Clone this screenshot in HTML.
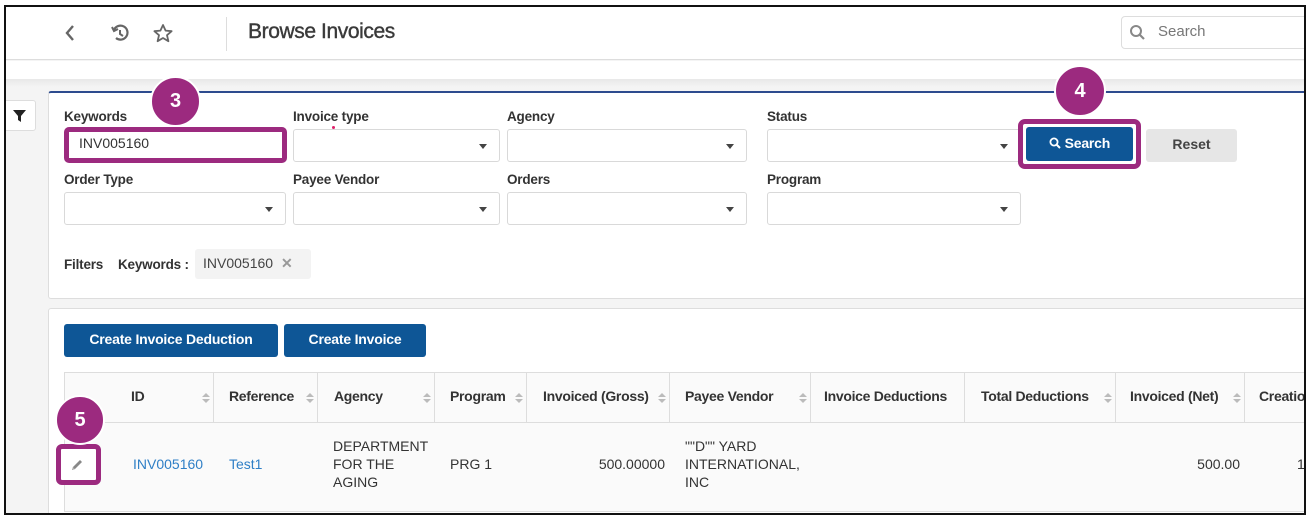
<!DOCTYPE html>
<html><head><meta charset="utf-8"><style>
*{box-sizing:border-box;margin:0;padding:0}
body{width:1311px;height:522px;background:#fff;position:relative;overflow:hidden;font-family:"Liberation Sans",sans-serif;color:#333}
.a{position:absolute}
.frame{left:4px;top:5px;width:1302px;height:510px;border:2px solid #111;overflow:hidden;background:#f4f4f4}
.in{position:absolute}
.lbl{font-size:13.5px;font-weight:bold;color:#333;letter-spacing:-.2px}
.sel{background:#fff;border:1px solid #d9d9d9;border-radius:3px;height:33px}
.sel:after{content:"";position:absolute;right:12px;top:14px;border-left:4px solid transparent;border-right:4px solid transparent;border-top:5px solid #444}
.badge{background:#9c2a7f;border:2px solid #fff;border-radius:50%;color:#fff;font-weight:bold;font-size:20px;text-align:center}
.btn{background:#0e5696;color:#fff;font-weight:bold;font-size:14px;border-radius:3px;text-align:center;letter-spacing:-.2px}
.th{position:absolute;top:0;height:50px;line-height:46px;font-size:14px;font-weight:bold;color:#333;border-right:1px solid #ddd;padding-left:16px;letter-spacing:-.3px;white-space:nowrap}
.th i{position:absolute;right:7px;top:20px;width:0;height:0}
.th i:before{content:"";position:absolute;left:-4px;top:0;border-left:4px solid transparent;border-right:4px solid transparent;border-bottom:4px solid #bbb}
.th i:after{content:"";position:absolute;left:-4px;top:6px;border-left:4px solid transparent;border-right:4px solid transparent;border-top:4px solid #bbb}
.td{position:absolute;font-size:14px;line-height:18px;color:#333}
</style></head><body>
<div class="a frame">
 <div class="in" style="left:0;top:0;width:1300px;height:53px;background:#fff;border-bottom:1px solid #ddd"></div>
 <svg class="in" style="left:52px;top:14px" width="130" height="26" viewBox="0 0 130 26">
  <path d="M15 5 L9 12 L15 19" fill="none" stroke="#666" stroke-width="2.4"/>
  <path d="M56 9 A7 7 0 1 1 58 17" fill="none" stroke="#666" stroke-width="2.2"/>
  <path d="M54 6 L56 10 L60 8" fill="none" stroke="#666" stroke-width="2"/>
  <path d="M62 9 L62 13 L65 15" fill="none" stroke="#666" stroke-width="2"/>
  <path d="M105 4 L107.6 9.6 L113.6 10.2 L109 14.2 L110.4 20.2 L105 17 L99.6 20.2 L101 14.2 L96.4 10.2 L102.4 9.6 Z" fill="none" stroke="#666" stroke-width="1.8" stroke-linejoin="round"/>
 </svg>
 <div class="in" style="left:220px;top:10px;width:1px;height:34px;background:#ddd"></div>
 <div class="in" style="left:242px;top:13px;font-size:21px;color:#3a3a3a;letter-spacing:-.4px;-webkit-text-stroke:.4px #3a3a3a">Browse Invoices</div>
 <div class="in" style="left:1115px;top:9px;width:200px;height:33px;border:1px solid #ddd;border-radius:4px;background:#fff"></div>
 <svg class="in" style="left:1123px;top:17px" width="18" height="18"><circle cx="7" cy="7" r="5" fill="none" stroke="#888" stroke-width="2"/><path d="M11 11 L15 15" stroke="#888" stroke-width="2.2"/></svg>
 <div class="in" style="left:1152px;top:16px;font-size:15px;color:#777">Search</div>
 <div class="in" style="left:0;top:54px;width:1300px;height:18px;background:#fff"></div>
 <div class="in" style="left:0;top:72px;width:1300px;height:8px;background:linear-gradient(#e8e8e8,#f4f4f4)"></div>
 <div class="in" style="left:-4px;top:93px;width:34px;height:31px;background:#fff;border:1px solid #ddd;border-radius:3px"></div>
 <svg class="in" style="left:7px;top:102px" width="14" height="14"><path d="M0 1 H13 L8 7 V13 L5 11 V7 Z" fill="#222"/></svg>
 <div class="in" style="left:42px;top:84px;width:1260px;height:208px;background:#fff;border:1px solid #ddd;border-top:2px solid #2d4b8e;border-radius:3px"></div>
 <div class="in lbl" style="left:58px;top:102px">Keywords</div>
 <div class="in lbl" style="left:287px;top:102px">Invoice type</div>
 <div class="in lbl" style="left:501px;top:102px">Agency</div>
 <div class="in lbl" style="left:761px;top:102px">Status</div>
 <div class="in" style="left:326px;top:119px;width:3px;height:3px;border-radius:50%;background:#e0206a"></div>
 <div class="in" style="left:58px;top:120px;width:223px;height:36px;border:5px solid #9c2a7f;border-radius:5px;background:#fff;font-size:14px;padding:3px 0 0 10px;color:#333">INV005160</div>
 <div class="in sel" style="left:287px;top:122px;width:207px"></div>
 <div class="in sel" style="left:501px;top:122px;width:240px"></div>
 <div class="in sel" style="left:761px;top:122px;width:254px"></div>
 <div class="in lbl" style="left:58px;top:165px">Order Type</div>
 <div class="in lbl" style="left:287px;top:165px">Payee Vendor</div>
 <div class="in lbl" style="left:501px;top:165px">Orders</div>
 <div class="in lbl" style="left:761px;top:165px">Program</div>
 <div class="in sel" style="left:58px;top:185px;width:222px"></div>
 <div class="in sel" style="left:287px;top:185px;width:207px"></div>
 <div class="in sel" style="left:501px;top:185px;width:240px"></div>
 <div class="in sel" style="left:761px;top:185px;width:254px"></div>
 <div class="in" style="left:1012px;top:112px;width:123px;height:50px;border:5px solid #9c2a7f;border-radius:7px;background:#fff"></div>
 <div class="in btn" style="left:1020px;top:120px;width:107px;height:34px;line-height:32px">
  <svg width="12" height="12" style="vertical-align:-1px"><circle cx="5" cy="5" r="3.6" fill="none" stroke="#fff" stroke-width="1.8"/><path d="M7.5 7.5 L11 11" stroke="#fff" stroke-width="2"/></svg> Search</div>
 <div class="in" style="left:1140px;top:122px;width:91px;height:33px;background:#e6e6e6;border-radius:3px;text-align:center;line-height:31px;font-size:14px;font-weight:bold;color:#444">Reset</div>
 <div class="in lbl" style="left:58px;top:250px">Filters</div>
 <div class="in lbl" style="left:112px;top:250px">Keywords :</div>
 <div class="in" style="left:189px;top:242px;width:116px;height:30px;background:#f3f3f3;border-radius:3px;font-size:14px;line-height:29px;padding-left:8px;color:#444">INV005160 <span style="color:#999;font-weight:bold;margin-left:4px">✕</span></div>
 <div class="in badge" style="left:144px;top:69px;width:51px;height:51px;line-height:47px">3</div>
 <div class="in badge" style="left:1048px;top:58px;width:52px;height:52px;line-height:48px">4</div>
 <div class="in" style="left:42px;top:301px;width:1262px;height:220px;background:#fff;border:1px solid #ddd;border-radius:3px"></div>
 <div class="in btn" style="left:58px;top:317px;width:214px;height:33px;line-height:30px">Create Invoice Deduction</div>
 <div class="in btn" style="left:278px;top:317px;width:142px;height:33px;line-height:30px">Create Invoice</div>
 <div class="in" style="left:58px;top:365px;width:1250px;height:140px;border:1px solid #ddd;background:#fafafa">
  <div class="in" style="left:0;top:0;width:1250px;height:50px;background:#fafafa;border-bottom:1px solid #ddd"></div>
  <div class="th" style="left:50px;width:99px">ID<i></i></div>
  <div class="th" style="left:149px;width:104px;padding-left:15px">Reference<i></i></div>
  <div class="th" style="left:253px;width:117px">Agency<i></i></div>
  <div class="th" style="left:370px;width:92px;padding-left:15px">Program<i></i></div>
  <div class="th" style="left:462px;width:143px">Invoiced (Gross)<i></i></div>
  <div class="th" style="left:605px;width:141px;padding-left:15px">Payee Vendor<i></i></div>
  <div class="th" style="left:746px;width:154px;padding-left:13px">Invoice Deductions</div>
  <div class="th" style="left:900px;width:151px">Total Deductions<i></i></div>
  <div class="th" style="left:1051px;width:129px;padding-left:14px">Invoiced (Net)<i></i></div>
  <div class="th" style="left:1180px;width:80px;padding-left:14px;border:0">Creation</div>
  <div class="td" style="left:68px;top:82px;color:#2f7fc6">INV005160</div>
  <div class="td" style="left:164px;top:82px;color:#2f7fc6">Test1</div>
  <div class="td" style="left:268px;top:64px">DEPARTMENT<br>FOR THE<br>AGING</div>
  <div class="td" style="left:385px;top:82px">PRG 1</div>
  <div class="td" style="left:462px;top:82px;width:138px;text-align:right">500.00000</div>
  <div class="td" style="left:620px;top:64px">""D"" YARD<br>INTERNATIONAL,<br>INC</div>
  <div class="td" style="left:1051px;top:82px;width:124px;text-align:right">500.00</div>
  <div class="td" style="left:1232px;top:82px">11</div>
 </div>
 <div class="in" style="left:50px;top:437px;width:45px;height:41px;border:5px solid #9c2a7f;border-radius:6px;background:#fff"></div>
 <svg class="in" style="left:64px;top:451px" width="14" height="14"><path d="M2 12 L3 9 L10 2 L12 4 L5 11 Z" fill="#888"/><path d="M2 12 L3 9 L5 11 Z" fill="#aaa"/></svg>
 <div class="in badge" style="left:49px;top:388px;width:50px;height:50px;line-height:46px">5</div>
</div>
</body></html>
